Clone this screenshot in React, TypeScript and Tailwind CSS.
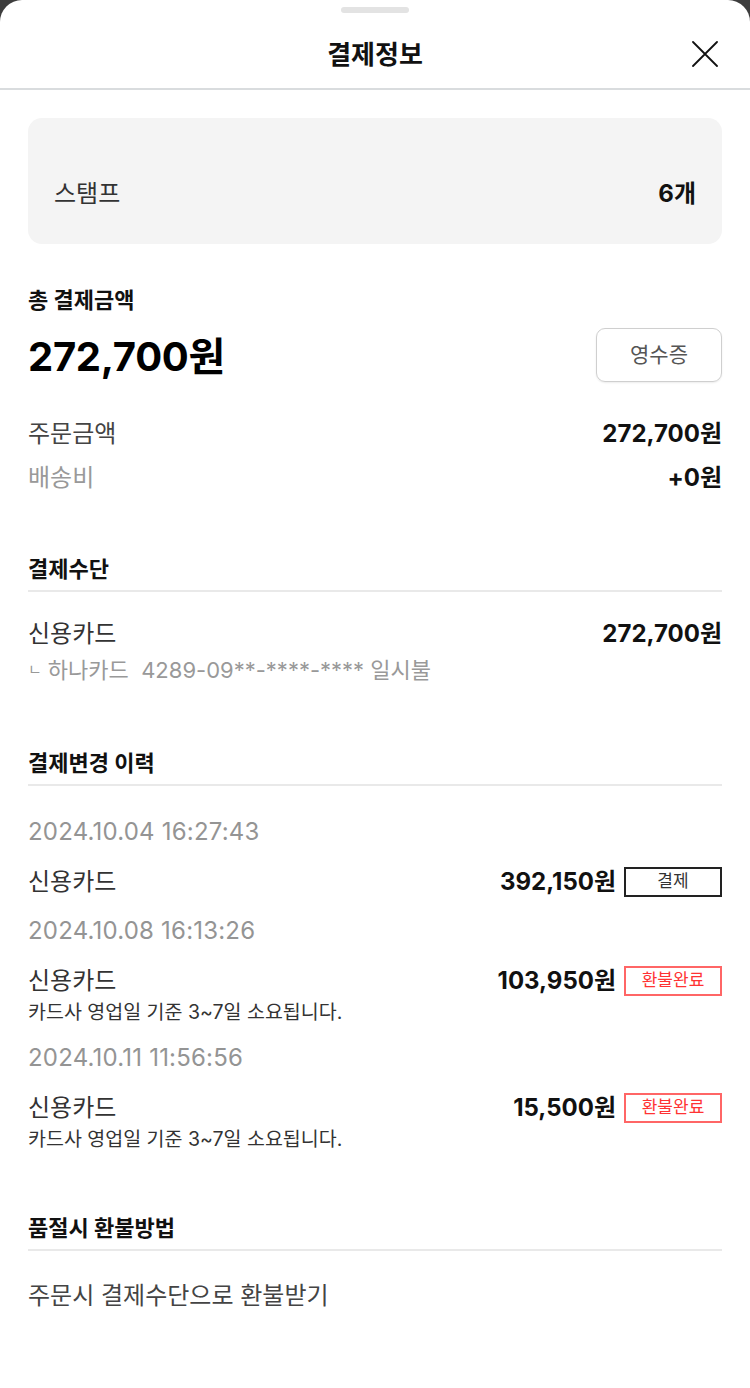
const font = { fontFamily: 'Inter, "Noto Sans CJK KR", "Noto Sans", sans-serif' };

type Change = {
  date: string;
  amount: string;
  status: 'paid' | 'refunded';
  note?: string;
};

const changes: Change[] = [
  { date: '2024.10.04 16:27:43', amount: '392,150원', status: 'paid' },
  { date: '2024.10.08 16:13:26', amount: '103,950원', status: 'refunded', note: '카드사 영업일 기준 3~7일 소요됩니다.' },
  { date: '2024.10.11 11:56:56', amount: '15,500원', status: 'refunded', note: '카드사 영업일 기준 3~7일 소요됩니다.' },
];

function SectionTitle({ children, className = '' }: { children: React.ReactNode; className?: string }) {
  return (
    <div className={`border-b-2 border-[#e9e9e9] pb-[8px] ${className}`}>
      <h3 className="text-[22px] leading-[26px] font-bold text-[#111]">{children}</h3>
    </div>
  );
}

export default function App() {
  return (
    <div className="min-h-[1388px] bg-[#3d3d3d]" style={font}>
      <div className="min-h-[1388px] bg-white rounded-t-[22px]">
        {/* handle */}
        <div className="h-[20px] pt-[7px]">
          <div className="mx-auto w-[68px] h-[6px] rounded-full bg-[#e3e3e3]" />
        </div>

        {/* header */}
        <div className="relative h-[70px] flex items-center justify-center border-b-2 border-[#d9dcde]">
          <h2 className="text-[26px] font-bold text-[#111]">결제정보</h2>
          <button className="absolute right-[32px] top-1/2 -translate-y-1/2 text-[#111]">
            <svg width="26" height="26" viewBox="0 0 26 26" fill="none" stroke="currentColor" strokeWidth="1.8" strokeLinecap="round">
              <path d="M1 1 L25 25 M25 1 L1 25" />
            </svg>
          </button>
        </div>

        <div className="px-[28px]">
          {/* stamp */}
          <div className="mt-[28px] h-[126px] rounded-[14px] bg-[#f4f4f4] px-[26px] pt-[62px] flex justify-between">
            <span className="text-[24px] leading-[28px] text-[#333]">스탬프</span>
            <span className="text-[24px] leading-[28px] font-bold text-[#111]">6개</span>
          </div>

          {/* total */}
          <p className="mt-[43px] text-[22px] leading-[26px] font-bold text-[#111]">총 결제금액</p>
          <div className="mt-[15px] h-[54px] flex items-center justify-between">
            <span className="text-[40px] leading-[46px] font-bold text-[#000] tracking-[-0.3px] pt-[4px]">272,700원</span>
            <button className="w-[126px] h-[54px] rounded-[9px] border border-[#cfcfcf] text-[21px] text-[#555] shadow-[0_1px_2px_rgba(0,0,0,0.08)]">
              영수증
            </button>
          </div>
          <div className="mt-[38px] flex justify-between leading-[28px] text-[24px]">
            <span className="text-[#444]">주문금액</span>
            <span className="font-bold text-[#111]">272,700원</span>
          </div>
          <div className="mt-[16px] flex justify-between leading-[28px] text-[24px]">
            <span className="text-[#999]">배송비</span>
            <span className="font-bold text-[#111]">+0원</span>
          </div>

          {/* method */}
          <SectionTitle className="mt-[64px]">결제수단</SectionTitle>
          <div className="mt-[28px] flex justify-between leading-[28px] text-[24px]">
            <span className="text-[#333]">신용카드</span>
            <span className="font-bold text-[#111]">272,700원</span>
          </div>
          <div className="mt-[9px] h-[26px] flex items-center text-[22px] text-[#999] whitespace-pre">
            <span className="text-[15px] mr-[6px]">ㄴ</span>
            <span>하나카드  4289-09**-****-**** 일시불</span>
          </div>

          {/* change history */}
          <SectionTitle className="mt-[67px]">결제변경 이력</SectionTitle>
          <div className="pt-[12px]">
            {changes.map((c) => (
              <div key={c.date} className="mt-[19px]">
                <p className="text-[24px] leading-[30px] text-[#949494] tracking-[0.2px]">{c.date}</p>
                <div className="mt-[20px] h-[30px] flex items-center justify-between">
                  <span className="text-[24px] text-[#333]">신용카드</span>
                  <div className="flex items-center gap-[8px]">
                    <span className="text-[24px] font-bold text-[#111]">{c.amount}</span>
                    {c.status === 'paid' ? (
                      <span className="w-[98px] h-[30px] flex items-center justify-center border-2 border-[#222] text-[17px] text-[#333]">
                        결제
                      </span>
                    ) : (
                      <span className="w-[98px] h-[30px] flex items-center justify-center border-2 border-[#f66] text-[17px] text-[#f33]">
                        환불완료
                      </span>
                    )}
                  </div>
                </div>
                {c.note && <p className="mt-[4px] mb-[5px] text-[19.5px] leading-[24px] text-[#333]">{c.note}</p>}
              </div>
            ))}
          </div>

          {/* refund method */}
          <SectionTitle className="mt-[64px]">품절시 환불방법</SectionTitle>
          <p className="mt-[31px] text-[24px] leading-[28px] text-[#444]">주문시 결제수단으로 환불받기</p>
        </div>
      </div>
    </div>
  );
}
